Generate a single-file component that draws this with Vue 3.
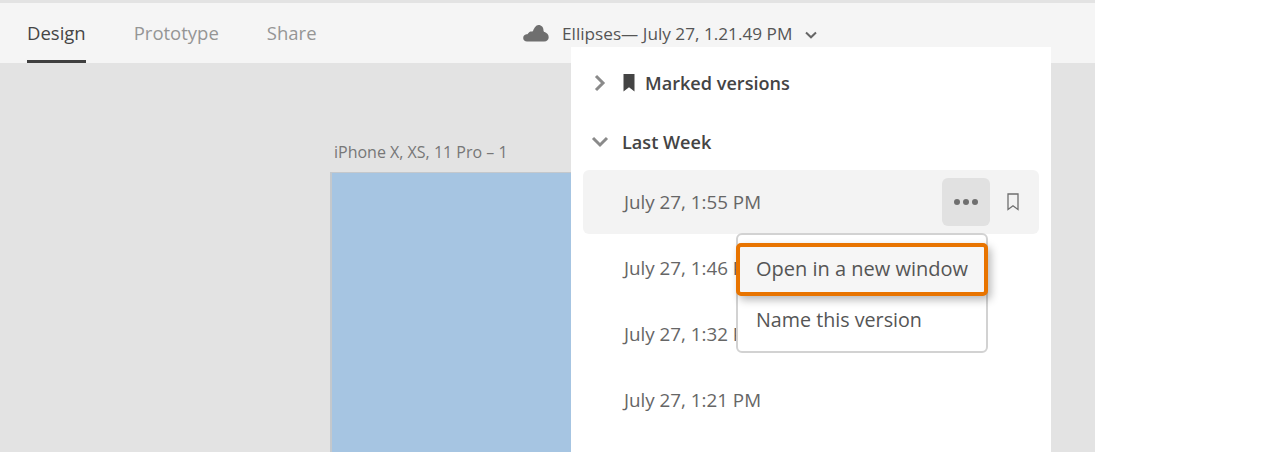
<template>
  <div class="page">
    <header class="bar">
      <nav class="tabs">
        <span class="tab active">Design</span>
        <span class="tab">Prototype</span>
        <span class="tab">Share</span>
      </nav>
      <div class="title">
        <svg class="cloud" width="26" height="18" viewBox="0 0 26 18"><path fill="#6f6f6f" d="M4 17.500C1.800 17.500.2 16 .2 14c0-1.900 1.300-3.400 3.200-3.700.7-.1 1.200-.2 1.500-.6.5-.6.7-1.200 1.600-1.800 1-.6 2-.5 2.700-.4.5-.1.7-.5 1-1.100C11.200 4.400 12.800 1 15.500 1c3 0 5 2.400 5 5.400 0 .9.500 1.300 1.300 1.700 2.300 1 3.900 2.900 3.900 5.200 0 2.500-1.900 4.200-4.400 4.200Z"/></svg>
        <span class="name">Ellipses— July 27, 1.21.49 PM</span>
        <svg class="caret" width="12" height="8" viewBox="0 0 12 8"><path d="M1 1.500 6 6.300l5-4.800" fill="none" stroke="#666" stroke-width="2"/></svg>
      </div>
    </header>
    <main class="canvas">
      <div class="artboard">
        <div class="label">iPhone X, XS, 11 Pro – 1</div>
        <div class="screen"></div>
      </div>
    </main>
    <aside class="panel">
      <div class="head marked">
        <svg class="chev" width="12" height="18" viewBox="0 0 12 18"><path d="M2 2l7 7-7 7" fill="none" stroke="#8a8a8a" stroke-width="3"/></svg>
        <svg class="mark" width="12" height="18" viewBox="0 0 12 18"><path fill="#444" d="M.5 0h11v17.500L6 13.300.5 17.500Z"/></svg>
        <span>Marked versions</span>
      </div>
      <div class="head week">
        <svg class="chev-d" width="18" height="12" viewBox="0 0 18 12"><path d="M2 2l7 7 7-7" fill="none" stroke="#8a8a8a" stroke-width="3"/></svg>
        <span>Last Week</span>
      </div>
      <div class="row hover">
        <span>July 27, 1:55 PM</span>
        <div class="actions">
          <div class="more"><i></i><i></i><i></i></div>
          <svg width="12" height="18" viewBox="0 0 12 18"><path fill="none" stroke="#6f6f6f" stroke-width="1.300" d="M1 1h10v15.500L6 12.800 1 16.500Z"/></svg>
        </div>
      </div>
      <div class="row">July 27, 1:46 PM</div>
      <div class="row">July 27, 1:32 PM</div>
      <div class="row">July 27, 1:21 PM</div>
      <div class="menu">
        <div class="item focus">Open in a new window</div>
        <div class="item">Name this version</div>
      </div>
    </aside>
  </div>
</template>

<script setup>
</script>

<style scoped>
.page {
  position: relative;
  width: 1095px;
  height: 452px;
  overflow: hidden;
  display: flex;
  flex-direction: column;
  background: #e3e3e3;
  font-family: "Open Sans", "Noto Sans", sans-serif;
  color: #4a4a4a;
}
.bar {
  position: relative;
  height: 60px;
  margin-top: 3px;
  flex: none;
  background: #f5f5f5;
}
.tabs {
  display: flex;
  gap: 48px;
  padding-left: 27px;
  height: 60px;
}
.tab {
  font-size: 18.5px;
  line-height: 60px;
  color: #959595;
  height: 60px;
  box-sizing: border-box;
}
.tab.active {
  color: #454545;
  border-bottom: 3px solid #3f3f3f;
}
.title {
  position: absolute;
  left: 523px;
  top: 19px;
  display: flex;
  align-items: center;
  height: 22px;
}
.name {
  margin-left: 13px;
  font-size: 17.2px;
  color: #555;
  white-space: nowrap;
}
.caret {
  margin-left: 13px;
  margin-top: 3px;
}
.canvas {
  flex: 1;
  position: relative;
}
.artboard {
  position: absolute;
  left: 330px;
  top: 78px;
}
.label {
  font-size: 16px;
  line-height: 22px;
  padding-bottom: 9px;
  color: #777;
  padding-left: 4px;
  white-space: nowrap;
}
.screen {
  width: 300px;
  height: 300px;
  background: #a6c5e2;
  border-left: 2px solid #c4c8cc;
  border-top: 1px solid #c4c8cc;
}
.panel {
  position: absolute;
  left: 571px;
  top: 47px;
  width: 480px;
  height: 405px;
  background: #fff;
  padding: 0 12px;
  box-sizing: border-box;
}
.head {
  display: flex;
  align-items: center;
  font-size: 18.1px;
  font-weight: 600;
  color: #444;
  white-space: nowrap;
}
.marked {
  height: 36px;
  margin-top: 18px;
  padding-left: 11px;
}
.mark { margin-left: 17px; }
.marked span { margin-left: 10px; }
.week {
  height: 36px;
  margin-top: 23px;
  margin-bottom: 10px;
  padding-left: 8px;
}
.week span { margin-left: 13px; }
.row {
  height: 64px;
  margin-bottom: 2px;
  padding-left: 41px;
  display: flex;
  align-items: center;
  font-size: 18.8px;
  color: #666;
  white-space: nowrap;
}
.row.hover {
  background: #f3f3f3;
  border-radius: 6px;
  justify-content: space-between;
  padding-right: 20px;
}
.actions {
  display: flex;
  align-items: center;
  gap: 17px;
}
.more {
  width: 48px;
  height: 48px;
  border-radius: 6px;
  background: #e1e1e1;
  display: flex;
  align-items: center;
  justify-content: center;
  gap: 3px;
}
.more i {
  width: 6px;
  height: 6px;
  border-radius: 50%;
  background: #6f6f6f;
}
.menu {
  position: absolute;
  left: 165px;
  top: 186px;
  width: 252px;
  height: 120px;
  box-sizing: border-box;
  background: #fff;
  border: 2px solid #d2d2d2;
  border-radius: 6px;
  padding-top: 8px;
}
.item {
  height: 52px;
  line-height: 48px;
  padding-left: 18px;
  font-size: 19.7px;
  color: #555;
  white-space: nowrap;
}
.item.focus {
  position: relative;
  height: 53px;
  line-height: 43px;
  margin: 0 -2px;
  padding-left: 16px;
  font-size: 20px;
  border: 4px solid #e87400;
  border-radius: 5px;
  background: #f6f6f6;
  box-sizing: border-box;
  box-shadow: 3px 4px 8px rgba(0,0,0,.28);
}
</style>
